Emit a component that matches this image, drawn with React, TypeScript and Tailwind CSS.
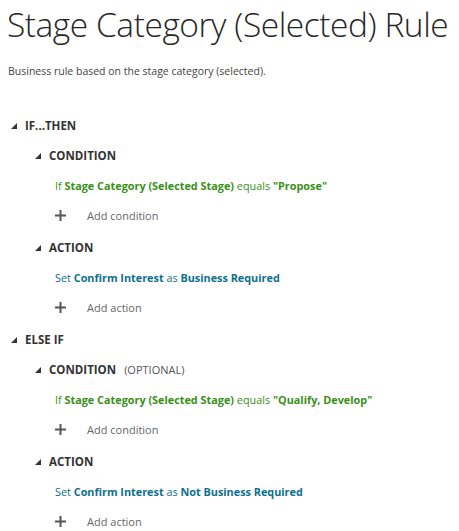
import React from "react";

const font = { fontFamily: '"Open Sans", "Segoe UI", sans-serif' };

function Caret() {
  return (
    <svg width="6" height="6" viewBox="0 0 6 6" className="shrink-0">
      <polygon points="6,0 6,6 0,6" fill="#333" />
    </svg>
  );
}

function Header({ label, extra, level }: { label: string; extra?: string; level: 1 | 2 }) {
  return (
    <div className={`flex items-center h-[30px] ${level === 1 ? "pl-[11px]" : "pl-[35px]"}`}>
      <Caret />
      <span className="ml-[8px] text-[11.5px] font-bold text-[#333]">{label}</span>
      {extra && <span className="ml-[8px] text-[11px] text-[#555]">{extra}</span>}
    </div>
  );
}

function AddRow({ label }: { label: string }) {
  return (
    <div className="flex items-center h-[30px] pl-[55px]">
      <svg width="11" height="11" viewBox="0 0 11 11" className="shrink-0">
        <rect x="4.5" y="0" width="2" height="11" fill="#555" />
        <rect x="0" y="4.5" width="11" height="2" fill="#555" />
      </svg>
      <span className="ml-[21px] text-[11px] text-[#666]">{label}</span>
    </div>
  );
}

function ConditionLine({ value }: { value: string }) {
  return (
    <div className="flex items-center h-[30px] pl-[55px] text-[10.85px] text-[#3a8f1a]">
      <span>If&nbsp;</span>
      <span className="font-bold">Stage Category (Selected Stage)</span>
      <span>&nbsp;equals&nbsp;</span>
      <span className="font-bold">"{value}"</span>
    </div>
  );
}

function ActionLine({ value }: { value: string }) {
  return (
    <div className="flex items-center h-[30px] pl-[55px] text-[10.85px] text-[#0e6f8e]">
      <span>Set&nbsp;</span>
      <span className="font-bold">Confirm Interest</span>
      <span>&nbsp;as&nbsp;</span>
      <span className="font-bold">{value}</span>
    </div>
  );
}

export default function App() {
  return (
    <div className="w-[459px] h-[531px] bg-white overflow-hidden" style={font}>
      <h1 className="pl-[7px] pt-[2px] text-[33.5px] leading-[44px] font-light text-[#262626] whitespace-nowrap tracking-[-0.45px]">
        Stage Category (Selected) Rule
      </h1>
      <p className="pl-[8px] mt-[18px] text-[10.5px] text-[#444]">
        Business rule based on the stage category (selected).
      </p>

      <div className="mt-[31px]">
        <Header label="IF...THEN" level={1} />
        <Header label="CONDITION" level={2} />
        <ConditionLine value="Propose" />
        <AddRow label="Add condition" />
        <div className="h-[2px]" />
        <Header label="ACTION" level={2} />
        <ActionLine value="Business Required" />
        <AddRow label="Add action" />
        <div className="h-[2px]" />
        <Header label="ELSE IF" level={1} />
        <Header label="CONDITION" extra="(OPTIONAL)" level={2} />
        <ConditionLine value="Qualify, Develop" />
        <AddRow label="Add condition" />
        <div className="h-[2px]" />
        <Header label="ACTION" level={2} />
        <ActionLine value="Not Business Required" />
        <AddRow label="Add action" />
      </div>
    </div>
  );
}
